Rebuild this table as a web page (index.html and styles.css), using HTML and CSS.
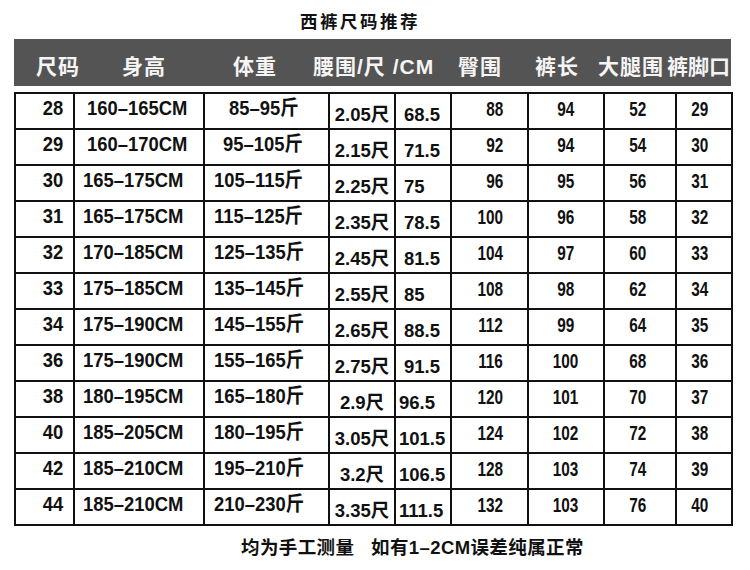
FILE: index.html
```html
<!DOCTYPE html>
<html lang="zh-CN">
<head>
<meta charset="utf-8">
<title>西裤尺码推荐</title>
<link rel="stylesheet" href="styles.css">
</head>
<body>
<div class="page">
  <h1 class="title">西裤尺码推荐</h1>
  <div class="head">
    <span>尺码</span><span>身高</span><span>体重</span><span>腰围/尺 /CM</span><span>臀围</span><span>裤长</span><span>大腿围</span><span class="last">裤脚口</span>
  </div>
  <table class="sizes">
    <colgroup>
      <col class="w1"><col class="w2"><col class="w3"><col class="w4"><col class="w5"><col class="w6"><col class="w7"><col class="w8"><col class="w9">
    </colgroup>
    <tbody>
      <tr><td><span>28</span></td><td class="i1"><span>160–165CM</span></td><td class="i28"><span>85–95斤</span></td><td><span>2.05尺</span></td><td><span>68.5</span></td><td><span>88</span></td><td><span>94</span></td><td><span>52</span></td><td><span>29</span></td></tr>
      <tr><td><span>29</span></td><td class="i1"><span>160–170CM</span></td><td class="i29"><span>95–105斤</span></td><td><span>2.15尺</span></td><td><span>71.5</span></td><td><span>92</span></td><td><span>94</span></td><td><span>54</span></td><td><span>30</span></td></tr>
      <tr><td><span>30</span></td><td><span>165–175CM</span></td><td><span>105–115斤</span></td><td><span>2.25尺</span></td><td><span>75</span></td><td><span>96</span></td><td><span>95</span></td><td><span>56</span></td><td><span>31</span></td></tr>
      <tr><td><span>31</span></td><td><span>165–175CM</span></td><td><span>115–125斤</span></td><td><span>2.35尺</span></td><td><span>78.5</span></td><td><span>100</span></td><td><span>96</span></td><td><span>58</span></td><td><span>32</span></td></tr>
      <tr><td><span>32</span></td><td><span>170–185CM</span></td><td><span>125–135斤</span></td><td><span>2.45尺</span></td><td><span>81.5</span></td><td><span>104</span></td><td><span>97</span></td><td><span>60</span></td><td><span>33</span></td></tr>
      <tr><td><span>33</span></td><td><span>175–185CM</span></td><td><span>135–145斤</span></td><td><span>2.55尺</span></td><td><span>85</span></td><td><span>108</span></td><td><span>98</span></td><td><span>62</span></td><td><span>34</span></td></tr>
      <tr><td><span>34</span></td><td><span>175–190CM</span></td><td><span>145–155斤</span></td><td><span>2.65尺</span></td><td><span>88.5</span></td><td><span>112</span></td><td><span>99</span></td><td><span>64</span></td><td><span>35</span></td></tr>
      <tr><td><span>36</span></td><td><span>175–190CM</span></td><td><span>155–165斤</span></td><td><span>2.75尺</span></td><td><span>91.5</span></td><td><span>116</span></td><td><span>100</span></td><td><span>68</span></td><td><span>36</span></td></tr>
      <tr><td><span>38</span></td><td><span>180–195CM</span></td><td><span>165–180斤</span></td><td><span>2.9尺</span></td><td class="wide"><span>96.5</span></td><td><span>120</span></td><td><span>101</span></td><td><span>70</span></td><td><span>37</span></td></tr>
      <tr><td><span>40</span></td><td><span>185–205CM</span></td><td><span>180–195斤</span></td><td><span>3.05尺</span></td><td class="wide"><span>101.5</span></td><td><span>124</span></td><td><span>102</span></td><td><span>72</span></td><td><span>38</span></td></tr>
      <tr><td><span>42</span></td><td><span>185–210CM</span></td><td><span>195–210斤</span></td><td><span>3.2尺</span></td><td class="wide"><span>106.5</span></td><td><span>128</span></td><td><span>103</span></td><td><span>74</span></td><td><span>39</span></td></tr>
      <tr><td><span>44</span></td><td><span>185–210CM</span></td><td><span>210–230斤</span></td><td><span>3.35尺</span></td><td class="wide"><span>111.5</span></td><td><span>132</span></td><td><span>103</span></td><td><span>76</span></td><td><span>40</span></td></tr>
    </tbody>
  </table>
  <p class="note">均为手工测量&nbsp;&nbsp;&nbsp;如有1–2CM误差纯属正常</p>
</div>
</body>
</html>
```
FILE: styles.css
```css
html, body {
  margin: 0;
  padding: 0;
  background: #ffffff;
}

body {
  font-family: "Liberation Sans", "Noto Sans CJK SC", sans-serif;
  color: #111111;
}

.page {
  width: 750px;
  height: 570px;
  box-sizing: border-box;
  padding-left: 14px;
  overflow: hidden;
}

.title {
  margin: 0;
  height: 39px;
  box-sizing: border-box;
  padding: 12px 0 0 286px;
  font-size: 17.5px;
  line-height: 20px;
  letter-spacing: 2.5px;
  font-weight: bold;
  color: #111111;
}

.head {
  width: 717px;
  height: 47px;
  box-sizing: border-box;
  padding: 8px 0 0 22px;
  background: #545454;
  color: #f4f4f4;
  font-size: 21px;
  font-weight: bold;
  line-height: 39px;
  letter-spacing: 1px;
  white-space: nowrap;
  display: grid;
  grid-template-columns: 86px 111px 80px 145px 77px 63px 69px minmax(0, 1fr);
}

.head .last {
  letter-spacing: 0;
}

.sizes {
  margin-top: 6px;
  width: 717px;
  border-collapse: collapse;
  table-layout: fixed;
  font-weight: bold;
}

.w1 { width: 59px; }
.w2 { width: 130px; }
.w3 { width: 125px; }
.w4 { width: 66px; }
.w5 { width: 56px; }
.w6 { width: 77px; }
.w7 { width: 76px; }
.w8 { width: 72px; }
.w9 { width: 56px; }

.sizes tr {
  height: 36px;
}

.sizes td {
  border: 2px solid #111111;
  padding: 0;
  vertical-align: middle;
  white-space: nowrap;
  font-size: 20px;
  line-height: 20px;
}

.sizes td span {
  display: inline-block;
}

/* size */
.sizes td:nth-child(1) {
  text-align: right;
  padding-right: 10px;
  padding-bottom: 6px;
}
.sizes td:nth-child(1) span {
  transform: scaleX(0.92);
  transform-origin: right center;
}

/* height */
.sizes td:nth-child(2) {
  text-align: left;
  padding-left: 8px;
  padding-bottom: 6px;
}
.sizes td:nth-child(2).i1 {
  padding-left: 12px;
}
.sizes td:nth-child(2) span {
  transform: scaleX(0.92);
  transform-origin: left center;
}

/* weight */
.sizes td:nth-child(3) {
  text-align: left;
  padding-left: 9px;
  padding-bottom: 6px;
}
.sizes td:nth-child(3).i28 {
  padding-left: 24px;
}
.sizes td:nth-child(3).i29 {
  padding-left: 18px;
}
.sizes td:nth-child(3) span {
  transform: scaleX(0.92);
  transform-origin: left center;
}

/* waist in chi */
.sizes td:nth-child(4) {
  text-align: center;
  font-size: 18.5px;
  padding-top: 7px;
}

/* waist in cm */
.sizes td:nth-child(5) {
  text-align: left;
  font-size: 18.5px;
  padding-left: 8px;
  padding-top: 7px;
}
.sizes td:nth-child(5).wide {
  padding-left: 3px;
}

/* hip, length, thigh, hem */
.sizes td:nth-child(6) {
  text-align: right;
  padding-right: 24px;
  padding-bottom: 4px;
  font-size: 21px;
}
.sizes td:nth-child(6) span {
  transform: scaleX(0.73);
  transform-origin: right center;
}

.sizes td:nth-child(7),
.sizes td:nth-child(8),
.sizes td:nth-child(9) {
  text-align: center;
  padding-bottom: 4px;
  font-size: 21px;
}
.sizes td:nth-child(8) {
  padding-right: 4px;
}
.sizes td:nth-child(9) {
  padding-right: 8px;
}
.sizes td:nth-child(7) span,
.sizes td:nth-child(8) span,
.sizes td:nth-child(9) span {
  transform: scaleX(0.73);
  transform-origin: center center;
}

.note {
  margin: 12px 0 0 227px;
  font-size: 18.5px;
  line-height: 20px;
  letter-spacing: 0.4px;
  font-weight: bold;
  white-space: nowrap;
  color: #111111;
}
```
